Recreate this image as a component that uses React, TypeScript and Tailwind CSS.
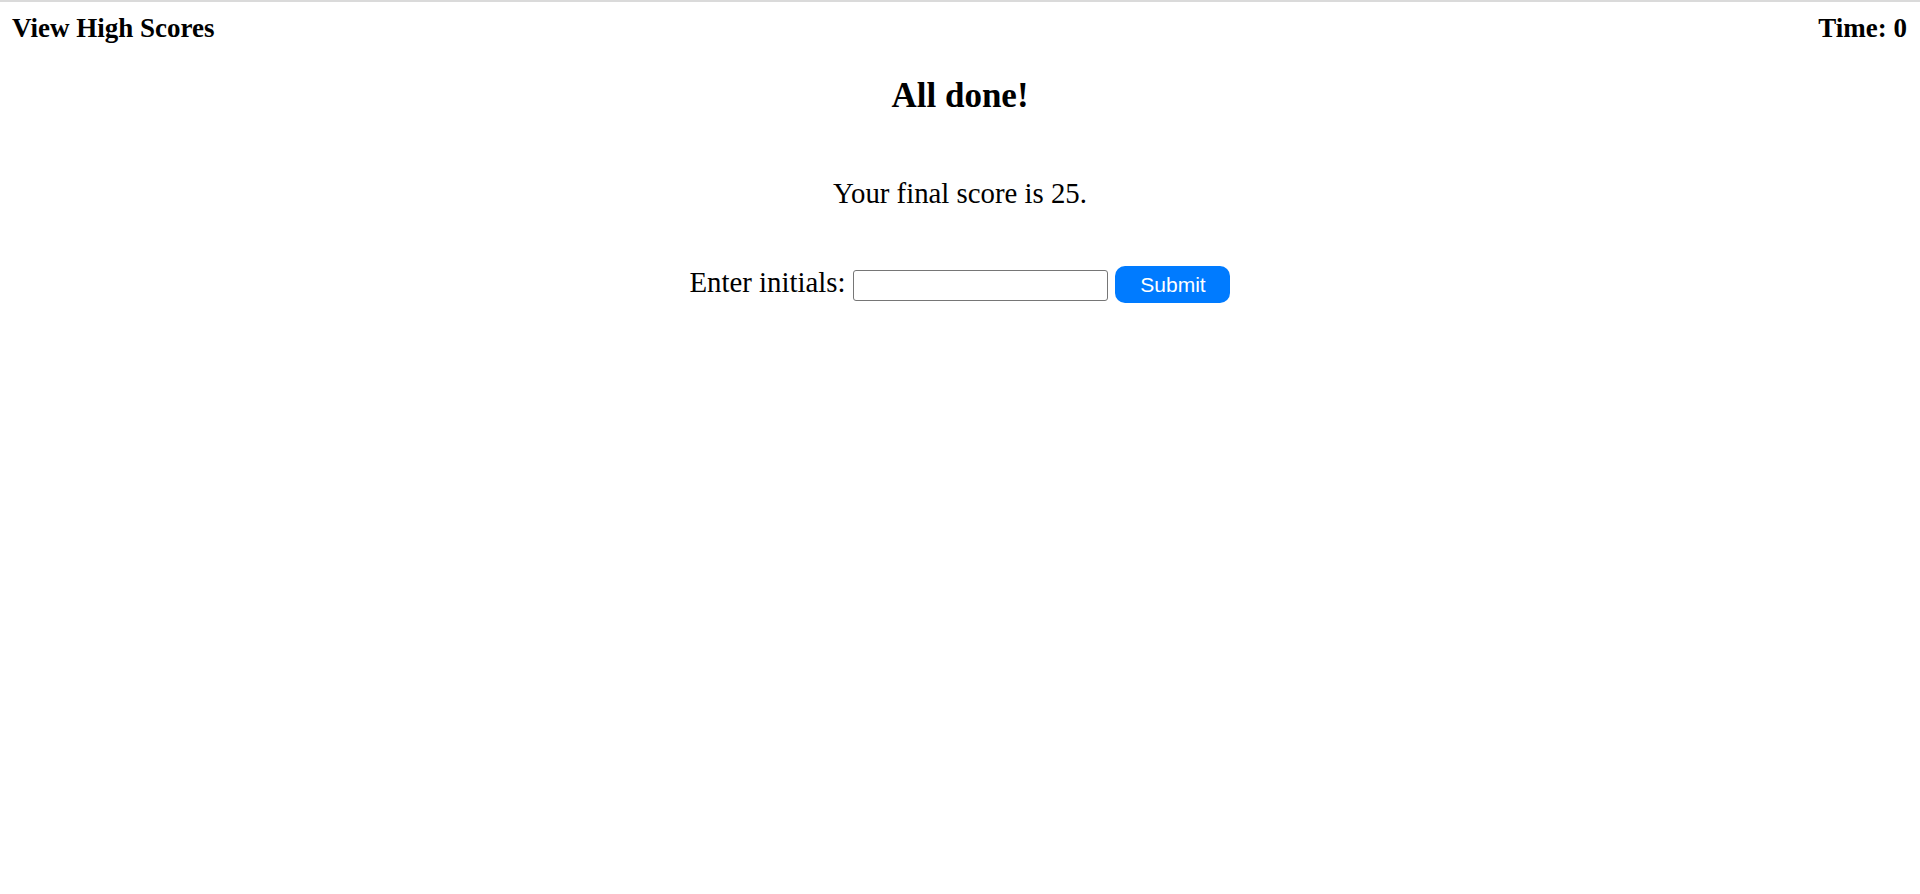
const serif = { fontFamily: '"Liberation Serif", "Times New Roman", serif' };

const App = () => {
    return (
        <div className="min-h-screen bg-white text-black border-t-2 border-[#dadada]" style={serif}>
            {/* top bar */}
            <header className="flex justify-between items-center pt-[6px] pl-3 pr-[13px]">
                <a href="#" className="text-[27px] leading-[40px] font-bold text-black no-underline">View High Scores</a>
                <span className="text-[27px] leading-[40px] font-bold">Time: 0</span>
            </header>

            <main className="flex flex-col items-center">
                <h1 className="mt-[28px] text-[35px] leading-[40px] font-bold">All done!</h1>
                <p className="mt-[57px] text-[28.8px] leading-[40px]">Your final score is 25.</p>
                <form className="mt-[53px] flex items-start" onSubmit={(e) => e.preventDefault()}>
                    <label htmlFor="initials" className="-mt-[2px] text-[28.8px] leading-[37px] mr-[8px]">Enter initials:</label>
                    <input
                        id="initials"
                        type="text"
                        className="mt-[4px] w-[255px] h-[31px] border border-[#767676] rounded-[3px] bg-white px-1 outline-none"
                    />
                    <button
                        type="submit"
                        className="ml-[7px] w-[115px] h-[37px] rounded-[10px] bg-[#007bff] text-white text-[21px] leading-none"
                        style={{ fontFamily: '"Liberation Sans", Arial, sans-serif' }}
                    >
                        Submit
                    </button>
                </form>
            </main>
        </div>
    );
};

export default App;
